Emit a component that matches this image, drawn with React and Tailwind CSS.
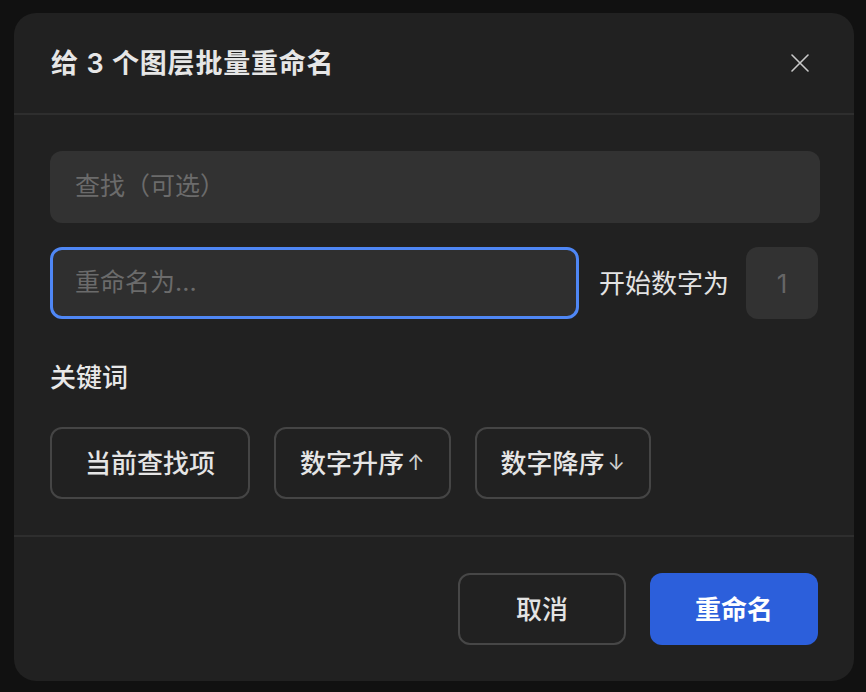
export default function App() {
  const font = { fontFamily: '"Inter", "Noto Sans CJK SC", sans-serif' };
  return (
    <div className="min-h-screen w-full bg-[#111111] pt-[13px] pl-[14px]" style={font}>
      <div className="flex h-[668px] w-[840px] flex-col rounded-[22px] bg-[#212121]">
        {/* header */}
        <div className="flex h-[102px] items-center justify-between border-b-2 border-[#2e2e2e] pl-[37px] pr-[45px]">
          <h1 className="text-[27px] font-semibold leading-none tracking-[0.8px] text-[#e6e6e6]">
            给 3 个图层批量重命名
          </h1>
          <button className="flex h-[18px] w-[18px] items-center justify-center">
            <svg width="18" height="18" viewBox="0 0 18 18" fill="none">
              <path d="M1 1L17 17M17 1L1 17" stroke="#c9c9c9" strokeWidth="1.6" strokeLinecap="round" />
            </svg>
          </button>
        </div>

        {/* body */}
        <div className="flex flex-col pl-9 pr-[34px] pt-9 pb-9">
          <div className="flex h-[72px] items-center rounded-[12px] bg-[#323232] px-[25px] text-[25px] text-[#6b6b6b]">
            查找（可选）
          </div>

          <div className="mt-6 flex items-center">
            <div className="flex h-[72px] flex-1 items-center rounded-[12px] border-[3px] border-[#4f87f5] bg-[#2f2f2f] pl-[22px] text-[25px] text-[#6b6b6b]">
              重命名为...
            </div>
            <span className="ml-5 text-[26px] text-[#e3e3e3]">开始数字为</span>
            <div className="ml-[17px] mr-[2px] flex h-[72px] w-[72px] items-center justify-center rounded-[12px] bg-[#323232] text-[26px] text-[#666666]">
              1
            </div>
          </div>

          <div className="mt-[41px] h-[36px] text-[26px] font-medium leading-[36px] text-[#e8e8e8]">关键词</div>

          <div className="mt-[31px] flex gap-6">
            <button className="flex h-[72px] min-w-[200px] items-center justify-center rounded-[12px] border-2 border-[#454545] px-6 text-[26px] font-medium text-[#e5e5e5]">
              当前查找项
            </button>
            <button className="flex h-[72px] items-center justify-center rounded-[12px] border-2 border-[#454545] px-6 text-[26px] font-medium text-[#e5e5e5]">
              数字升序<span className="ml-[3px] text-[21px] font-normal text-[#d0d0d0]">↑</span>
            </button>
            <button className="flex h-[72px] items-center justify-center rounded-[12px] border-2 border-[#454545] px-6 text-[26px] font-medium text-[#e5e5e5]">
              数字降序<span className="ml-[3px] text-[21px] font-normal text-[#d0d0d0]">↓</span>
            </button>
          </div>
        </div>

        {/* footer */}
        <div className="flex justify-end gap-6 border-t-2 border-[#2e2e2e] pt-9 pr-9 pb-9">
          <button className="flex h-[72px] w-[168px] items-center justify-center rounded-[12px] border-2 border-[#474747] text-[26px] font-medium text-[#e3e3e3]">
            取消
          </button>
          <button className="flex h-[72px] w-[168px] items-center justify-center rounded-[12px] bg-[#2c5fdb] text-[26px] font-semibold text-white">
            重命名
          </button>
        </div>
      </div>
    </div>
  );
}
